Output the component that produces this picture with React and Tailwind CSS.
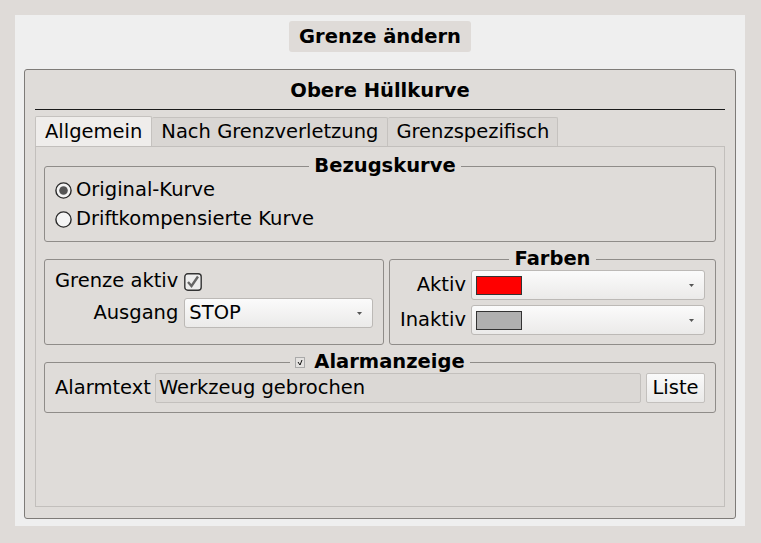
import React from "react";

const font = { fontFamily: '"DejaVu Sans", "Noto Sans", sans-serif' };

function Arrow() {
  return (
    <svg width="5" height="3" viewBox="0 0 5 3" className="shrink-0">
      <path d="M0 0 L5 0 L2.5 3 Z" fill="#555" />
    </svg>
  );
}

function Combo({ children, className = "" }) {
  return (
    <div
      className={
        "flex items-center justify-between h-[30px] rounded-[3px] border border-[#bcb9b6] bg-gradient-to-b from-[#fbfbfb] to-[#ebeae9] pl-[3px] pr-[10px] " +
        className
      }
    >
      <div className="flex items-center">{children}</div>
      <Arrow />
    </div>
  );
}

function Radio({ checked }) {
  return (
    <svg width="17" height="17" viewBox="0 0 17 17" className="shrink-0">
      <circle cx="8.5" cy="8.5" r="7.6" fill="#f4f4f4" stroke="#2a2a2a" strokeWidth="1.4" />
      {checked && <circle cx="8.5" cy="8.5" r="4.3" fill="#555" />}
    </svg>
  );
}

function Group({ title, children, className = "", legendExtra = null }) {
  return (
    <fieldset
      className={
        "border border-[#8f8c89] rounded-[3px] min-w-0 " + className
      }
    >
      <legend className="mx-auto px-[5px] font-bold leading-[22px] flex items-center">
        {legendExtra}
        {title}
      </legend>
      {children}
    </fieldset>
  );
}

export default function App() {
  return (
    <div
      className="w-[761px] h-[543px] bg-[#dfdbd8] pt-[15px] pl-[15px] pr-[16px] pb-[17px] text-[19.5px] text-black"
      style={font}
    >
      <div className="w-full h-full bg-[#efefef] flex flex-col pt-[6px]">
        <div className="self-center w-[182px] h-[31px] rounded-[3px] bg-[#dfdbd8] flex items-center justify-center font-bold">
          Grenze ändern
        </div>
        <div className="mt-[17px] mx-[9px] mb-[7px] flex-1 border border-[#7e7b78] rounded-[3px] bg-[#dfdcd9] px-[10px] pb-[11px] flex flex-col">
          <div className="h-[39px] flex items-end justify-center font-bold pb-[7px] leading-[22px]">
            Obere Hüllkurve
          </div>
          <div className="h-px bg-[#1a1a1a]" />
          {/* tabs */}
          <div className="mt-[6px] flex h-[30px] items-stretch">
            <div className="px-[9px] flex items-center border border-b-0 border-[#c5c2bf] bg-[#efedeb] rounded-t-[2px]">
              Allgemein
            </div>
            <div className="px-[9px] flex items-center border border-b-0 border-l-0 border-[#c5c2bf] bg-[#d9d6d3] rounded-t-[2px] mt-[1px]">
              Nach Grenzverletzung
            </div>
            <div className="px-[8px] flex items-center border border-b-0 border-l-0 border-[#c5c2bf] bg-[#d9d6d3] rounded-t-[2px] mt-[1px]">
              Grenzspezifisch
            </div>
          </div>
          <div className="flex-1 border border-[#c2bfbc] bg-[#dfdcd9] pt-[8px] px-[8px] flex flex-col">
            <Group title="Bezugskurve" className="pl-[10px] pb-[11px]">
              <div className="flex flex-col gap-[7px] mt-[2px]">
                <div className="flex items-center gap-[4px] h-[22px]">
                  <Radio checked />
                  <span>Original-Kurve</span>
                </div>
                <div className="flex items-center gap-[4px] h-[22px]">
                  <Radio />
                  <span>Driftkompensierte Kurve</span>
                </div>
              </div>
            </Group>
            <div className="mt-[6px] flex gap-[5px] items-end">
              <div className="w-[340px] h-[86px] border border-[#8f8c89] rounded-[3px] pl-[10px] pr-[10px] pt-[10px]">
                <div className="grid grid-cols-[auto_1fr] gap-x-[6px] gap-y-[5px] items-center">
                  <span className="text-right h-[23px] leading-[22px]">Grenze aktiv</span>
                  <div className="flex items-center">
                    <svg width="18" height="18" viewBox="0 0 18 18">
                      <rect x="0.8" y="0.8" width="16.4" height="16.4" rx="3" fill="#eeeeee" stroke="#333" strokeWidth="1.4" />
                      <path d="M4 9 L7.5 13 L14 3.5" fill="none" stroke="#666" strokeWidth="2.4" />
                    </svg>
                  </div>
                  <span className="text-right">Ausgang</span>
                  <Combo>
                    <span className="pl-[1px]">STOP</span>
                  </Combo>
                </div>
              </div>
              <Group title="Farben" className="flex-1 h-[97px] pl-[10px] pr-[10px] pb-[10px]">
                <div className="grid grid-cols-[auto_1fr] gap-x-[5px] gap-y-[5px] items-center">
                  <span className="text-right">Aktiv</span>
                  <Combo>
                    <div className="w-[46px] h-[19px] bg-[#ff0000] border border-[#333] ml-[1px]" />
                  </Combo>
                  <span className="text-right">Inaktiv</span>
                  <Combo>
                    <div className="w-[46px] h-[19px] bg-[#b0b0b0] border border-[#333] ml-[1px]" />
                  </Combo>
                </div>
              </Group>
            </div>
            <Group
              title="Alarmanzeige"
              className="mt-[6px] pl-[10px] pr-[10px] pb-[9px]"
              legendExtra={
                <svg width="10" height="11" viewBox="0 0 10 11" className="mr-[9px]">
                  <rect x="0.5" y="0.5" width="9" height="10" fill="#e4e2e0" stroke="#aaa" />
                  <path d="M3 5 L5 8 L7 3" fill="none" stroke="#111" strokeWidth="1" />
                </svg>
              }
            >
              <div className="flex items-center gap-[4px]">
                <span>Alarmtext</span>
                <div className="flex-1 h-[30px] border border-[#c3c0bd] bg-[#dbd8d5] rounded-[2px] flex items-center pl-[3px]">
                  Werkzeug gebrochen
                </div>
                <div className="ml-[1px] w-[59px] h-[30px] border border-[#c3c0bd] rounded-[2px] bg-gradient-to-b from-[#fafafa] to-[#eae9e8] flex items-center justify-center">
                  Liste
                </div>
              </div>
            </Group>
          </div>
        </div>
      </div>
    </div>
  );
}
